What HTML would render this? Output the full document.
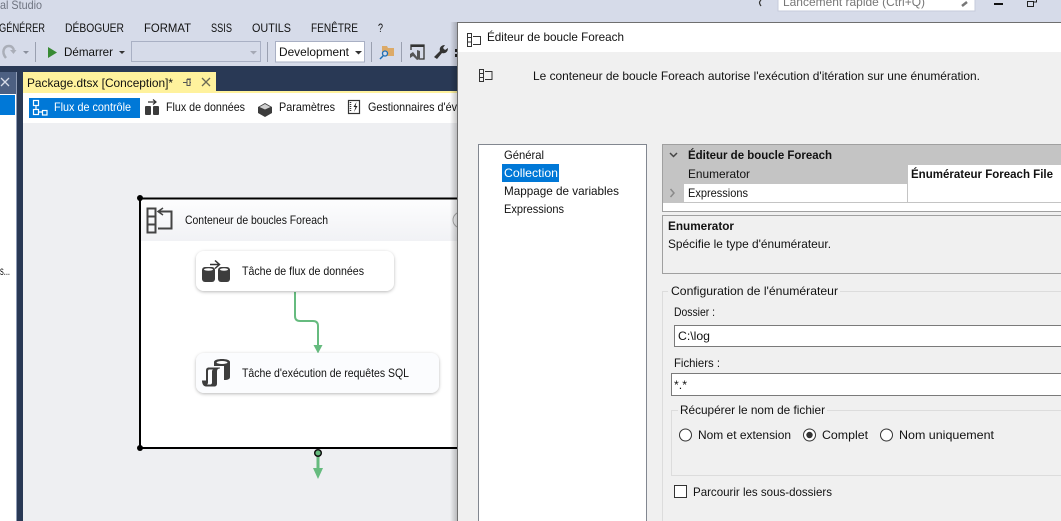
<!DOCTYPE html>
<html lang="fr">
<head>
<meta charset="utf-8">
<title>Éditeur de boucle Foreach</title>
<style>
html,body{margin:0;padding:0;background:#293955;width:1061px;height:521px;overflow:hidden}
svg{display:block;position:absolute;left:0;top:0}
text{font-family:"Liberation Sans",sans-serif;font-size:12px;fill:#111;white-space:pre}
</style>
</head>
<body>
<svg width="1061" height="521" viewBox="0 0 1061 521" xmlns="http://www.w3.org/2000/svg">
<defs>
<linearGradient id="hd" x1="0" y1="0" x2="0" y2="1"><stop offset="0" stop-color="#fdfdfe"/><stop offset="1" stop-color="#f1f2f5"/></linearGradient>
<filter id="sh" x="-10%" y="-20%" width="120%" height="150%"><feDropShadow dx="0" dy="1" stdDeviation="1.500" flood-color="#000" flood-opacity=".28"/></filter>
<linearGradient id="dsh" x1="0" y1="0" x2="1" y2="0"><stop offset="0" stop-color="#000" stop-opacity="0"/><stop offset="1" stop-color="#000" stop-opacity=".22"/></linearGradient>
</defs>

<!-- chrome -->
<rect x="0" y="0" width="1061" height="66" fill="#d6dbe9"/>
<rect x="0" y="66" width="1061" height="455" fill="#293955"/>
<text x="0" y="9" style="fill:#6f7480" textLength="42" lengthAdjust="spacingAndGlyphs">al Studio</text>

<text x="-1" y="32" textLength="46" lengthAdjust="spacingAndGlyphs">GÉNÉRER</text>
<text x="65" y="32" textLength="59" lengthAdjust="spacingAndGlyphs">DÉBOGUER</text>
<text x="144" y="32" textLength="47" lengthAdjust="spacingAndGlyphs">FORMAT</text>
<text x="211" y="32" textLength="21" lengthAdjust="spacingAndGlyphs">SSIS</text>
<text x="252" y="32" textLength="39" lengthAdjust="spacingAndGlyphs">OUTILS</text>
<text x="311" y="32" textLength="47" lengthAdjust="spacingAndGlyphs">FENÊTRE</text>
<text x="378" y="32" textLength="5" lengthAdjust="spacingAndGlyphs">?</text>

<!-- quick launch -->
<path d="M761 0c-2 2-2 3 0 6" fill="none" stroke="#333" stroke-width="1.200"/>
<rect x="778" y="-2" width="197" height="13" fill="#fff" stroke="#c6cbdb"/>
<text x="783" y="6" style="fill:#777" textLength="142" lengthAdjust="spacingAndGlyphs">Lancement rapide (Ctrl+Q)</text>
<path d="M962 6l5-4" stroke="#777" stroke-width="2.500"/>
<rect x="994" y="3" width="9" height="2" fill="#111"/>
<path d="M1027.500 1.500h6v5h-6zM1033.500 2h3v-3" fill="none" stroke="#222"/>

<!-- toolbar -->
<path d="M6 58C1 52 4 46 9 46C12 46 13 48 14 50" fill="none" stroke="#aaaeb8" stroke-width="2.500"/>
<path d="M10 50h6.500l-3 4z" fill="#aaaeb8"/>
<path d="M23 51h6l-3 3z" fill="#8a8f9c"/>
<rect x="35" y="42" width="1" height="20" fill="#9aa0b0"/>
<path d="M48 47l9 5.500-9 5.500z" fill="#388a34"/>
<text x="64" y="56" textLength="49" lengthAdjust="spacingAndGlyphs">Démarrer</text>
<path d="M119 51h6l-3 3z" fill="#333"/>
<rect x="131.500" y="41.500" width="129" height="20" fill="#d6dbe9" stroke="#a9b0c4"/>
<path d="M250 51h7l-3.500 3.500z" fill="#a5a9b5"/>
<rect x="267" y="42" width="1" height="20" fill="#9aa0b0"/>
<rect x="275.500" y="41.500" width="89" height="20.500" fill="#fff" stroke="#a9b0c4"/>
<text x="279" y="56" textLength="70" lengthAdjust="spacingAndGlyphs">Development</text>
<path d="M355 51h7l-3.500 3.500z" fill="#333"/>
<rect x="371" y="42" width="1" height="20" fill="#9aa0b0"/>
<path d="M382 46h5l1 2h6v8h-12z" fill="#dcaa68"/>
<circle cx="385" cy="53.500" r="2.500" fill="#d6dbe9" stroke="#1c6fb8" stroke-width="1.300"/>
<path d="M383 56l-3 3" stroke="#1c6fb8" stroke-width="1.500"/>
<rect x="401" y="42" width="1" height="20" fill="#9aa0b0"/>
<path d="M411 50v-5h13v14h-5" fill="none" stroke="#333" stroke-width="1.300"/>
<rect x="411" y="45" width="13" height="2" fill="#333"/>
<path d="M410 54l3-2 4 5v-7l3 1v8l-3 1-4-4-3 2z" fill="#555"/>
<path d="M434 57l6-6c-1-3 1-6 5-6l-2 3 2 2 3-2c0 4-3 6-6 5l-5 6z" fill="#333"/>
<rect x="455" y="49" width="3" height="3" fill="#222"/>
<rect x="455" y="54" width="3" height="3" fill="#222"/>

<!-- left panel -->
<rect x="0" y="72" width="17" height="449" fill="#8e9bb5"/>
<rect x="0" y="72" width="16" height="22" fill="#4d6082"/>
<path d="M1 78l8 8M9 78l-8 8" stroke="#d7dce8" stroke-width="1.300"/>
<rect x="0" y="94" width="16" height="427" fill="#fff"/>
<rect x="0" y="95" width="15" height="20" fill="#0078d7"/>
<text x="0" y="275" textLength="10" lengthAdjust="spacingAndGlyphs">s...</text>

<!-- doc area -->
<rect x="23" y="72" width="193" height="20" fill="#fff29d"/>
<rect x="23" y="91" width="1038" height="2" fill="#fff29d"/>
<rect x="23" y="93" width="1038" height="30" fill="#fff"/>
<rect x="23" y="123" width="1038" height="398" fill="#eeeff2"/>
<text x="27" y="87" textLength="146" lengthAdjust="spacingAndGlyphs">Package.dtsx [Conception]*</text>
<path d="M183 82.500h4M187 79.500v6h3v-6zM190 82.500h1M187 79h4" fill="none" stroke="#555" stroke-width="1"/>
<path d="M202 78l8 8M210 78l-8 8" stroke="#6b6a55" stroke-width="1.300"/>

<rect x="29" y="98" width="111" height="20" fill="#0078d7"/>
<g fill="none" stroke="#fff" stroke-width="1.200"><rect x="33.500" y="100.500" width="5" height="5"/><rect x="33.500" y="109.500" width="5" height="5"/><rect x="42.500" y="110.500" width="4.500" height="4.500"/><path d="M36 106v3M39 112h3"/></g>
<text x="54" y="111" style="fill:#fff" textLength="77" lengthAdjust="spacingAndGlyphs">Flux de contrôle</text>
<g fill="#3c3c3c"><rect x="145" y="106" width="6" height="9" rx="1"/><rect x="153" y="106" width="6" height="9" rx="1"/></g>
<path d="M148 102h8M153 99.500l3 2.500-3 2.500" fill="none" stroke="#333" stroke-width="1.200"/>
<text x="166" y="111" textLength="79" lengthAdjust="spacingAndGlyphs">Flux de données</text>
<path d="M258 107l7-4 7 4v6l-7 4-7-4z" fill="#3c3c3c"/><path d="M259.500 107l5.500-3 5.500 3-5.500 2.500z" fill="#cfcfcf"/>
<text x="279" y="111" textLength="56" lengthAdjust="spacingAndGlyphs">Paramètres</text>
<rect x="348.500" y="100.500" width="11" height="13" fill="#fff" stroke="#333" stroke-width="1.200"/>
<path d="M350.500 102v10" stroke="#333" stroke-width="1.500" stroke-dasharray="1 1"/>
<path d="M356.500 102l-3 5h2l-1.500 5 3.500-6h-2z" fill="#222"/>
<text x="368" y="111" textLength="95" lengthAdjust="spacingAndGlyphs">Gestionnaires d'évé</text>

<!-- container -->
<rect x="140" y="199" width="320" height="249" fill="#fff"/>
<rect x="141" y="200" width="320" height="41" fill="url(#hd)"/>
<path d="M140 198.500V448M139 198.500H460M139 448H460" fill="none" stroke="#000" stroke-width="2"/>
<circle cx="140" cy="198" r="3" fill="#000"/>
<circle cx="140" cy="448" r="3" fill="#000"/>
<g fill="none" stroke="#444" stroke-width="2"><rect x="147.500" y="208.500" width="8" height="24"/><path d="M147.500 216.500h8M147.500 224.500h8M159 211.500h12.500v17H158"/></g>
<path d="M163 208l-5 3.500 5 3.500" fill="none" stroke="#444" stroke-width="1.500"/>
<text x="185" y="224" textLength="143" lengthAdjust="spacingAndGlyphs">Conteneur de boucles Foreach</text>
<circle cx="461" cy="220" r="8" fill="none" stroke="#aaa"/>

<!-- connectors -->
<path d="M295 292v24q0 5 5 5h13q5 0 5 5v20" fill="none" stroke="#66bb7f" stroke-width="2"/>
<path d="M313.500 345h9l-4.500 8.500z" fill="#66bb7f"/>
<path d="M318 456v13" stroke="#66bb7f" stroke-width="3"/>
<path d="M313 468h10l-5 11z" fill="#66bb7f"/>
<circle cx="318" cy="453" r="3.300" fill="#66bb7f" stroke="#111" stroke-width="1.500"/>

<!-- tasks -->
<rect x="196" y="251" width="198" height="40" rx="8" fill="#fff" filter="url(#sh)"/>
<g fill="#3d3d3d"><rect x="202" y="267" width="13" height="15" rx="3"/><rect x="218" y="267" width="12" height="15" rx="3"/></g>
<g fill="#fff"><ellipse cx="208.500" cy="269.500" rx="4.500" ry="1.300"/><ellipse cx="224" cy="269.500" rx="4" ry="1.300"/></g>
<path d="M210 264.500h9M215 260.500l4.500 4-4.500 4" fill="none" stroke="#333" stroke-width="1.500"/>
<text x="242" y="275" textLength="122" lengthAdjust="spacingAndGlyphs">Tâche de flux de données</text>

<rect x="196" y="353" width="243" height="40" rx="8" fill="#fbfcfe" filter="url(#sh)"/>
<path d="M214 362c0-4 16-4 16 0v15c0 2-2 3-6 3v-14h-10z" fill="#3d3d3d"/>
<ellipse cx="222" cy="362.500" rx="5.500" ry="1.500" fill="#fff"/>
<path d="M209 367.500c-2 0-3 1-3 3v10h-4c0 4 2 6 4 6h8c2 0 3-1 3-3v-12c0-2 1-3 3-3v-1z M209 369.500h4c-.7.5-1 1-1 2v11c0 1-.5 2-2 2h-3c1-.5 1-2 1-3v-10c0-1 .3-2 1-2z" fill="#3d3d3d" fill-rule="evenodd"/>
<text x="242" y="377" textLength="167" lengthAdjust="spacingAndGlyphs">Tâche d'exécution de requêtes SQL</text>

<!-- dialog shadow + dialog -->
<rect x="450" y="22" width="7" height="499" fill="url(#dsh)"/>
<rect x="457" y="22" width="604" height="499" fill="#f0f0f0"/>
<rect x="457" y="22" width="604" height="1" fill="#6f6f6f"/>
<rect x="457" y="22" width="1" height="499" fill="#6f6f6f"/>
<rect x="458" y="23" width="603" height="29" fill="#fff"/>
<g fill="none" stroke="#333"><rect x="467.500" y="33.500" width="4" height="13"/><path d="M467.500 37.500h4M467.500 42h4M473 36.500h7.500v8H473"/></g>
<text x="487" y="41" textLength="137" lengthAdjust="spacingAndGlyphs">Éditeur de boucle Foreach</text>
<g fill="none" stroke="#333"><rect x="479.500" y="69.500" width="4" height="12"/><path d="M479.500 73.500h4M479.500 77.500h4M485 71.500h7v8h-7"/></g>
<text x="533" y="80" textLength="447" lengthAdjust="spacingAndGlyphs">Le conteneur de boucle Foreach autorise l'exécution d'itération sur une énumération.</text>

<!-- left list -->
<rect x="478.500" y="144.500" width="168" height="390" fill="#fff" stroke="#828790"/>
<text x="504" y="159" textLength="40" lengthAdjust="spacingAndGlyphs">Général</text>
<rect x="502" y="164" width="57" height="18" fill="#0078d7"/>
<text x="504" y="177" style="fill:#fff" textLength="54" lengthAdjust="spacingAndGlyphs">Collection</text>
<text x="504" y="195" textLength="115" lengthAdjust="spacingAndGlyphs">Mappage de variables</text>
<text x="504" y="213" textLength="60" lengthAdjust="spacingAndGlyphs">Expressions</text>

<!-- property grid -->
<rect x="662.500" y="144.500" width="410" height="67" fill="#fff" stroke="#a0a0a0"/>
<rect x="663" y="145" width="398" height="39" fill="#c4c4c4"/>
<rect x="908" y="165" width="153" height="19" fill="#fff"/>
<rect x="663" y="184" width="21" height="18" fill="#c4c4c4"/>
<rect x="907" y="184" width="1" height="18" fill="#c4c4c4"/>
<rect x="684" y="202" width="377" height="1" fill="#c4c4c4"/>
<rect x="663" y="202" width="21" height="1" fill="#c4c4c4"/>
<path d="M670 153l3.500 3.500 3.500-3.500" fill="none" stroke="#444" stroke-width="1.500"/>
<path d="M670.500 189l3.500 4-3.500 4" fill="none" stroke="#8a8a8a" stroke-width="1.500"/>
<text x="688" y="159" font-weight="bold" textLength="144" lengthAdjust="spacingAndGlyphs">Éditeur de boucle Foreach</text>
<text x="688" y="178" textLength="62" lengthAdjust="spacingAndGlyphs">Enumerator</text>
<text x="911" y="178" font-weight="bold" textLength="142" lengthAdjust="spacingAndGlyphs">Énumérateur Foreach File</text>
<text x="688" y="197" textLength="60" lengthAdjust="spacingAndGlyphs">Expressions</text>

<!-- help -->
<rect x="662.500" y="215.500" width="410" height="58" fill="#f0f0f0" stroke="#a0a0a0"/>
<text x="668" y="230" font-weight="bold" textLength="66" lengthAdjust="spacingAndGlyphs">Enumerator</text>
<text x="668" y="248" textLength="163" lengthAdjust="spacingAndGlyphs">Spécifie le type d'énumérateur.</text>

<!-- config -->
<path d="M668 291.500h-5.500V530M840 291.500h230" fill="none" stroke="#dcdcdc"/>
<text x="671" y="295" textLength="167" lengthAdjust="spacingAndGlyphs">Configuration de l'énumérateur</text>
<text x="674" y="316" textLength="41" lengthAdjust="spacingAndGlyphs">Dossier :</text>
<rect x="674.500" y="325.500" width="400" height="21" fill="#fff" stroke="#7a7a7a"/>
<text x="678" y="340" textLength="32" lengthAdjust="spacingAndGlyphs">C:\log</text>
<text x="674" y="367" textLength="46" lengthAdjust="spacingAndGlyphs">Fichiers :</text>
<rect x="671.500" y="373.500" width="403" height="22" fill="#fff" stroke="#7a7a7a"/>
<text x="674" y="389" textLength="13" lengthAdjust="spacingAndGlyphs">*.*</text>

<path d="M678 410.500h-6.500v65H1070M827 410.500h240" fill="none" stroke="#dcdcdc"/>
<text x="680" y="414" textLength="145" lengthAdjust="spacingAndGlyphs">Récupérer le nom de fichier</text>
<g fill="#fff" stroke="#333"><circle cx="685.500" cy="435" r="6"/><circle cx="809.500" cy="435" r="6"/><circle cx="886.500" cy="435" r="6"/></g>
<circle cx="809.500" cy="435" r="3.200" fill="#333"/>
<text x="698" y="439" textLength="93" lengthAdjust="spacingAndGlyphs">Nom et extension</text>
<text x="822" y="439" textLength="46" lengthAdjust="spacingAndGlyphs">Complet</text>
<text x="899" y="439" textLength="95" lengthAdjust="spacingAndGlyphs">Nom uniquement</text>
<rect x="674.500" y="485.500" width="12" height="12" fill="#fff" stroke="#333"/>
<text x="693" y="496" textLength="139" lengthAdjust="spacingAndGlyphs">Parcourir les sous-dossiers</text>
</svg>
</body>
</html>
